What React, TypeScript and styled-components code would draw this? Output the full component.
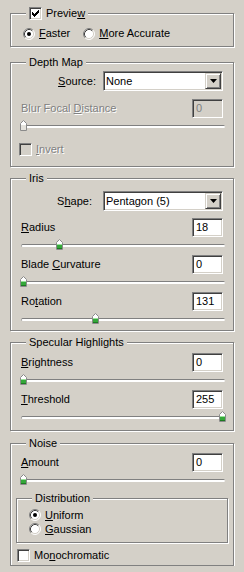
import React from 'react';
import styled, { createGlobalStyle } from 'styled-components';

const GlobalStyle = createGlobalStyle`
    html, body {
        margin: 0;
        padding: 0;
        background: #d4d0c8;
    }
    body {
        font-family: "Liberation Sans", Arial, sans-serif;
        font-size: 11px;
        color: #000;
    }
`;

const Panel = styled.div`
    width: 244px;
    box-sizing: border-box;
    padding: 0 10px;
    display: flex;
    flex-direction: column;
`;

//윈도우 클래식 그룹박스 (etched border)
const Group = styled.fieldset<{ $mt: number; $pt: number; $pb: number; $px?: number; $out?: number }>`
    margin: ${(p) => p.$mt}px ${(p) => -(p.$out ?? 0)}px 0;
    padding: ${(p) => p.$pt}px ${(p) => p.$px ?? 10}px ${(p) => p.$pb}px;
    border: 1px solid #808080;
    box-shadow: 1px 1px 0 #fff, inset 1px 1px 0 #fff;
    min-width: 0;
    display: flex;
    flex-direction: column;
`;

const Legend = styled.legend<{ $ml?: number }>`
    margin-left: ${(p) => p.$ml ?? 5}px;
    padding: 0 3px;
    height: 13px;
    line-height: 13px;
    background: #d4d0c8;
`;

const LegendInner = styled.span`
    display: inline-flex;
    align-items: center;
    gap: 4px;
    height: 13px;
`;

const Text = styled.span<{ $disabled?: boolean }>`
    line-height: 13px;
    white-space: nowrap;
    color: ${(p) => (p.$disabled ? '#808080' : '#000')};
    text-shadow: ${(p) => (p.$disabled ? '1px 1px 0 #fff' : 'none')};
`;

const Sunken = styled.div<{ $disabled?: boolean }>`
    box-sizing: border-box;
    border: 1px solid;
    border-color: #808080 #fff #fff #808080;
    box-shadow: inset 1px 1px 0 #404040, inset -1px -1px 0 #d4d0c8;
    background: ${(p) => (p.$disabled ? '#d4d0c8' : '#fff')};
`;

const CheckBox = styled(Sunken)`
    width: 13px;
    height: 13px;
    flex: none;
    position: relative;
`;

const CheckMark = styled.svg`
    position: absolute;
    left: -1px;
    top: -1px;
`;

const CheckRow = styled.label<{ $mt?: number; $ml?: number }>`
    display: flex;
    align-items: center;
    gap: 4px;
    height: 13px;
    margin-top: ${(p) => p.$mt ?? 0}px;
    margin-left: ${(p) => p.$ml ?? 0}px;
`;

const RadioGroup = styled.div<{ $dir: 'row' | 'column' }>`
    display: flex;
    flex-direction: ${(p) => p.$dir};
    gap: ${(p) => (p.$dir === 'row' ? '13px' : '0')};
    margin-left: ${(p) => (p.$dir === 'row' ? '2px' : '0')};
`;

const RadioRow = styled.label<{ $h: number }>`
    display: flex;
    align-items: center;
    gap: 4px;
    height: ${(p) => p.$h}px;
`;

const ComboRow = styled.div<{ $gap: number }>`
    display: flex;
    align-items: center;
    justify-content: flex-end;
    gap: ${(p) => p.$gap}px;
`;

const Combo = styled(Sunken)`
    width: 120px;
    height: 20px;
    padding: 1px;
    display: flex;
    align-items: center;
`;

const ComboText = styled.span`
    flex: 1;
    padding-left: 1px;
    line-height: 13px;
`;

const DropButton = styled.div`
    width: 16px;
    height: 16px;
    box-sizing: border-box;
    border: 1px solid;
    border-color: #d4d0c8 #404040 #404040 #d4d0c8;
    box-shadow: inset 1px 1px 0 #fff, inset -1px -1px 0 #808080;
    background: #d4d0c8;
    display: flex;
    align-items: center;
    justify-content: center;
`;

const FieldBlock = styled.div<{ $mt: number }>`
    margin-top: ${(p) => p.$mt}px;
    display: flex;
    flex-direction: column;
`;

const FieldRow = styled.div`
    display: flex;
    align-items: center;
    justify-content: space-between;
    height: 19px;
`;

const NumBox = styled(Sunken)`
    width: 31px;
    height: 19px;
    padding-left: 3px;
    line-height: 17px;
    color: ${(p) => (p.$disabled ? '#808080' : '#000')};
`;

const SliderWrap = styled.div`
    position: relative;
    height: 12px;
    margin: 2px -2px 0 0;
`;

const Track = styled.div`
    margin-top: 5px;
    height: 3px;
    box-sizing: border-box;
    border-top: 1px solid #808080;
    border-left: 1px solid #a0a0a0;
    border-radius: 2px;
    background: #fff;
`;

const Thumb = styled.svg`
    position: absolute;
    top: 0;
`;

function Check({ checked, disabled }: { checked?: boolean; disabled?: boolean }) {
    //클래식 체크 모양 (7x7)
    const starts = [2, 3, 4, 3, 2, 1, 0];
    return (
        <CheckBox $disabled={disabled}>
            {checked && (
                <CheckMark width="13" height="13" shapeRendering="crispEdges">
                    {starts.map((s, i) => (
                        <rect key={i} x={3 + i} y={3 + s} width="1" height="3" fill="#000" />
                    ))}
                </CheckMark>
            )}
        </CheckBox>
    );
}

function Radio({ checked }: { checked?: boolean }) {
    return (
        <svg width="12" height="12" style={{ flex: 'none' }}>
            <circle cx="6" cy="6" r="5" fill="#fff" />
            <path d="M2.11 9.89 A5.5 5.5 0 0 1 9.89 2.11" fill="none" stroke="#808080" />
            <path d="M9.89 2.11 A5.5 5.5 0 0 1 2.11 9.89" fill="none" stroke="#fff" />
            <path d="M2.82 9.18 A4.5 4.5 0 0 1 9.18 2.82" fill="none" stroke="#404040" />
            <path d="M9.18 2.82 A4.5 4.5 0 0 1 2.82 9.18" fill="none" stroke="#d4d0c8" />
            {checked && <circle cx="6" cy="6" r="2" fill="#000" />}
        </svg>
    );
}

function Slider({ value, max, disabled }: { value: number; max: number; disabled?: boolean }) {
    const left = Math.round((value / max) * 199) - 1;
    return (
        <SliderWrap>
            <Track />
            <Thumb width="7" height="11" style={{ left }}>
                <polygon points="3.5,0.5 6.5,3.5 6.5,10.5 0.5,10.5 0.5,3.5" fill="#fff" stroke="#8a8a8a" />
                {!disabled && (
                    <>
                        <rect x="1" y="5" width="5" height="5" fill="#35a83a" />
                        <rect x="1" y="5" width="5" height="1" fill="#9be39b" />
                        <rect x="1" y="9" width="5" height="1" fill="#1d7a22" />
                    </>
                )}
                {disabled && <rect x="1" y="5" width="5" height="5" fill="#e4e2dc" />}
            </Thumb>
        </SliderWrap>
    );
}

function Field({
    label,
    value,
    max,
    mt,
    disabled,
}: {
    label: React.ReactNode;
    value: number;
    max: number;
    mt: number;
    disabled?: boolean;
}) {
    return (
        <FieldBlock $mt={mt}>
            <FieldRow>
                <Text $disabled={disabled}>{label}</Text>
                <NumBox $disabled={disabled}>{value}</NumBox>
            </FieldRow>
            <Slider value={value} max={max} disabled={disabled} />
        </FieldBlock>
    );
}

function ComboField({ label, value, gap }: { label: React.ReactNode; value: string; gap: number }) {
    return (
        <ComboRow $gap={gap}>
            <Text>{label}</Text>
            <Combo>
                <ComboText>{value}</ComboText>
                <DropButton>
                    <svg width="7" height="4">
                        <polygon points="0,0 7,0 3.5,4" fill="#000" />
                    </svg>
                </DropButton>
            </Combo>
        </ComboRow>
    );
}

export default function App() {
    return (
        <>
            <GlobalStyle />
            <Panel>
                <Group $mt={7} $pt={7} $pb={6}>
                    <Legend>
                        <LegendInner>
                            <Check checked />
                            <Text>
                                Previe<u>w</u>
                            </Text>
                        </LegendInner>
                    </Legend>
                    <RadioGroup $dir="row">
                        <RadioRow $h={13}>
                            <Radio checked />
                            <Text>
                                <u>F</u>aster
                            </Text>
                        </RadioRow>
                        <RadioRow $h={13}>
                            <Radio />
                            <Text>
                                <u>M</u>ore Accurate
                            </Text>
                        </RadioRow>
                    </RadioGroup>
                </Group>

                <Group $mt={9} $pt={2} $pb={10}>
                    <Legend>Depth Map</Legend>
                    <ComboField
                        gap={7}
                        value="None"
                        label={
                            <>
                                <u>S</u>ource:
                            </>
                        }
                    />
                    <Field
                        mt={8}
                        value={0}
                        max={100}
                        disabled
                        label={
                            <>
                                Blur Focal <u>D</u>istance
                            </>
                        }
                    />
                    <CheckRow $mt={11} $ml={-2}>
                        <Check disabled />
                        <Text $disabled>
                            <u>I</u>nvert
                        </Text>
                    </CheckRow>
                </Group>

                <Group $mt={5} $pt={6} $pb={5}>
                    <Legend>Iris</Legend>
                    <ComboField
                        gap={11}
                        value="Pentagon (5)"
                        label={
                            <>
                                S<u>h</u>ape:
                            </>
                        }
                    />
                    <Field
                        mt={7}
                        value={18}
                        max={100}
                        label={
                            <>
                                <u>R</u>adius
                            </>
                        }
                    />
                    <Field
                        mt={4}
                        value={0}
                        max={100}
                        label={
                            <>
                                Blade <u>C</u>urvature
                            </>
                        }
                    />
                    <Field
                        mt={4}
                        value={131}
                        max={360}
                        label={
                            <>
                                Ro<u>t</u>ation
                            </>
                        }
                    />
                </Group>

                <Group $mt={5} $pt={4} $pb={7}>
                    <Legend>Specular Highlights</Legend>
                    <Field
                        mt={0}
                        value={0}
                        max={100}
                        label={
                            <>
                                <u>B</u>rightness
                            </>
                        }
                    />
                    <Field
                        mt={4}
                        value={255}
                        max={255}
                        label={
                            <>
                                <u>T</u>hreshold
                            </>
                        }
                    />
                </Group>

                <Group $mt={6} $pt={3} $pb={3}>
                    <Legend>Noise</Legend>
                    <Field
                        mt={0}
                        value={0}
                        max={100}
                        label={
                            <>
                                <u>A</u>mount
                            </>
                        }
                    />
                    <Group $mt={6} $pt={3} $pb={6} $px={12} $out={5}>
                        <Legend $ml={3}>Distribution</Legend>
                        <RadioGroup $dir="column">
                            <RadioRow $h={14}>
                                <Radio checked />
                                <Text>
                                    <u>U</u>niform
                                </Text>
                            </RadioRow>
                            <RadioRow $h={14}>
                                <Radio />
                                <Text>
                                    <u>G</u>aussian
                                </Text>
                            </RadioRow>
                        </RadioGroup>
                    </Group>
                    <CheckRow $mt={6} $ml={-4}>
                        <Check />
                        <Text>
                            Mo<u>n</u>ochromatic
                        </Text>
                    </CheckRow>
                </Group>
            </Panel>
        </>
    );
}
